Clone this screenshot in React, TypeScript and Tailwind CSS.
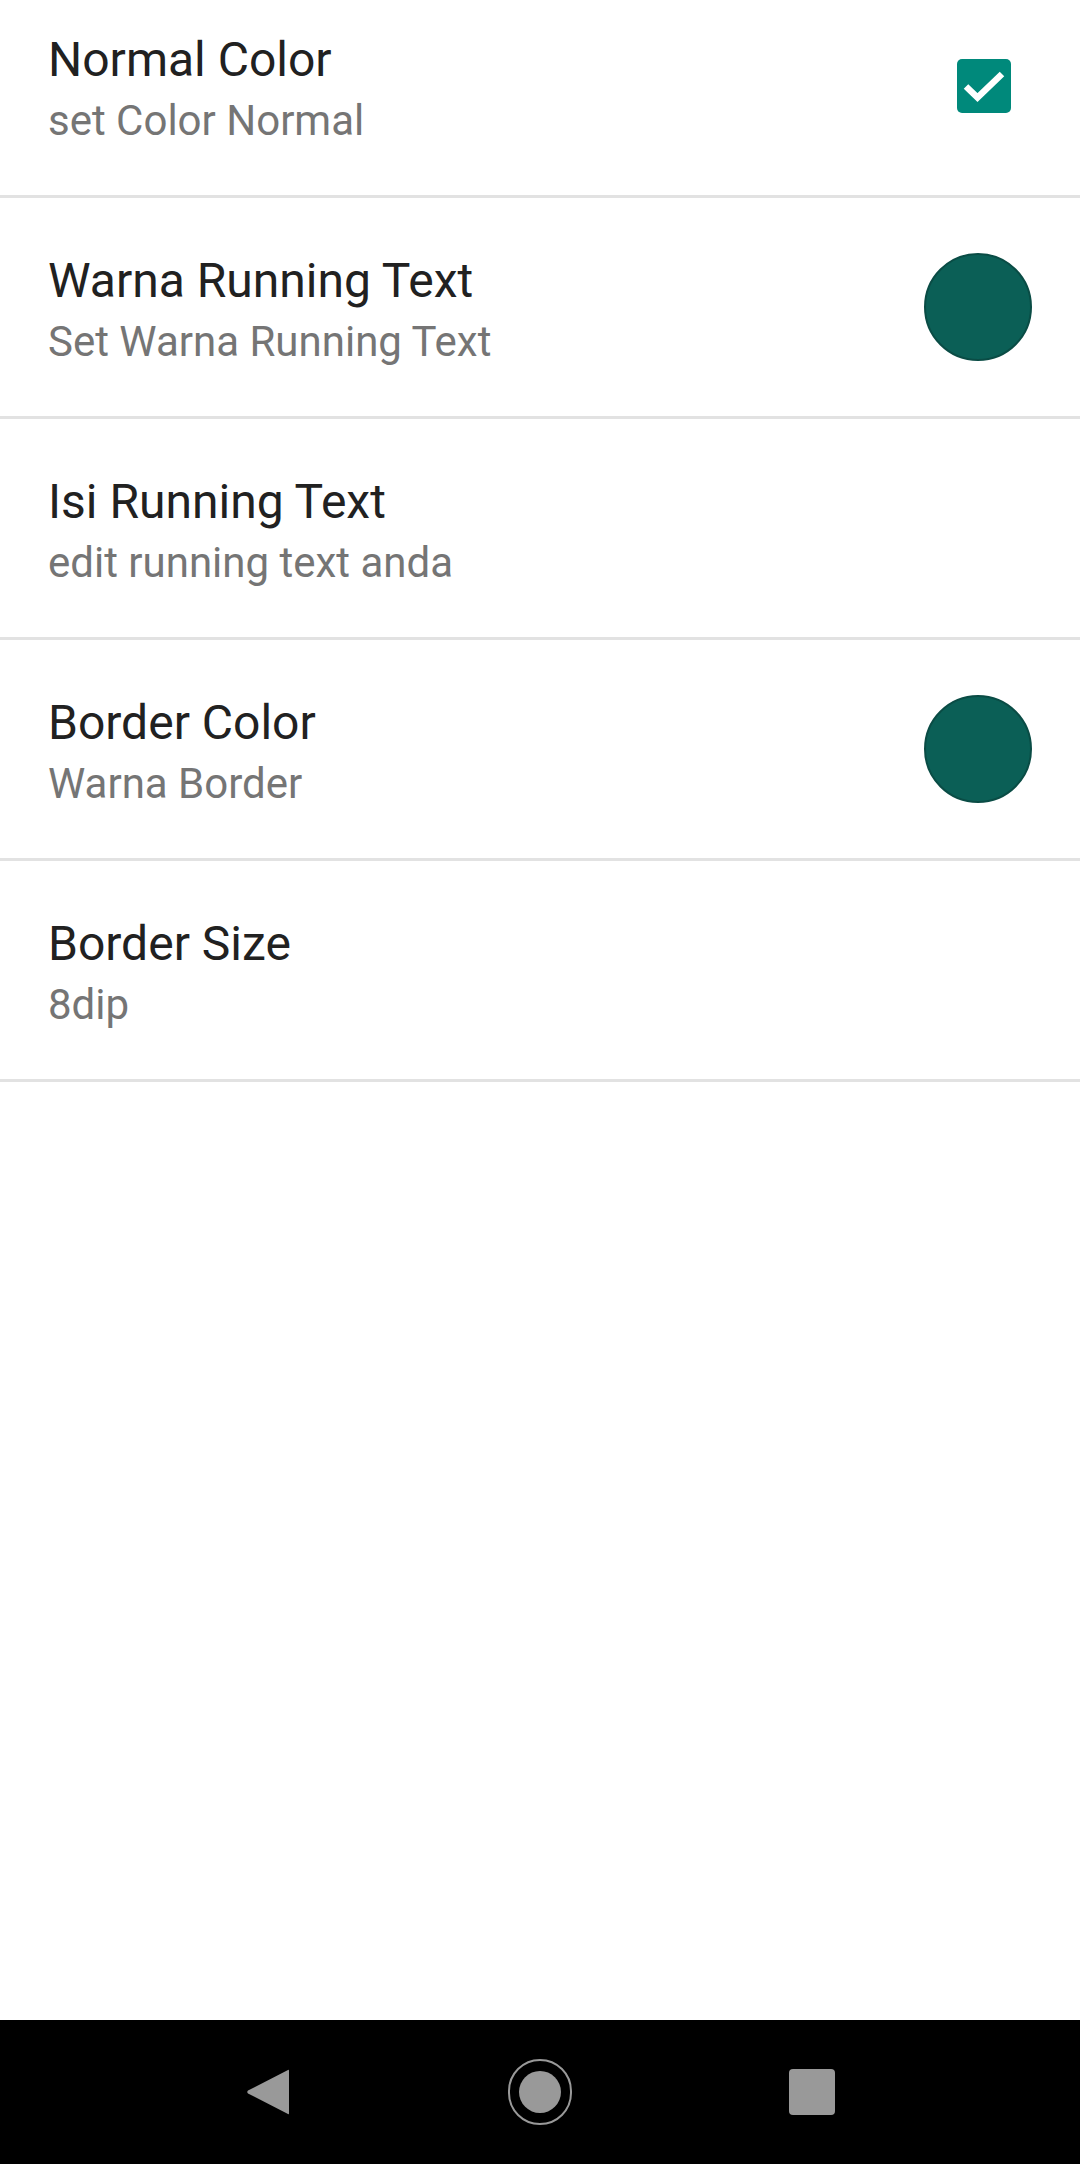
import type { ReactNode } from 'react'

type Pref = {
  title: string
  summary: string
  widget?: 'check' | 'color'
}

const PREFS: Pref[] = [
  { title: 'Normal Color', summary: 'set Color Normal', widget: 'check' },
  { title: 'Warna Running Text', summary: 'Set Warna Running Text', widget: 'color' },
  { title: 'Isi Running Text', summary: 'edit running text anda' },
  { title: 'Border Color', summary: 'Warna Border', widget: 'color' },
  { title: 'Border Size', summary: '8dip' },
]

function CheckBox() {
  return (
    <div className="mr-[21px] flex h-[54px] w-[54px] items-center justify-center rounded-[5px] bg-[#00897b]">
      <svg viewBox="0 0 54 54" className="h-[54px] w-[54px]">
        <polyline
          points="9,27.5 20.5,38.5 45,15"
          fill="none"
          stroke="#ffffff"
          strokeWidth="6.5"
          strokeLinejoin="miter"
        />
      </svg>
    </div>
  )
}

function ColorDot() {
  return <div className="h-[108px] w-[108px] rounded-full border-2 border-[#0a4c45] bg-[#0b5f56]" />
}

function PrefRow({ pref }: { pref: Pref }) {
  let widget: ReactNode = null
  if (pref.widget === 'check') widget = <CheckBox />
  if (pref.widget === 'color') widget = <ColorDot />

  return (
    <div className="flex h-[221px] items-center border-b-[3px] border-[#e2e2e2] pl-[48px] pr-[48px]">
      <div className="flex flex-1 flex-col pt-[6px]">
        <span className="text-[48px] leading-[56px] text-[#212121]">{pref.title}</span>
        <span className="mt-[8px] text-[42px] leading-[50px] text-[#757575]">{pref.summary}</span>
      </div>
      {widget}
    </div>
  )
}

function NavBar() {
  return (
    <div className="flex h-[144px] items-center justify-center gap-[176px] bg-black">
      {/* back */}
      <div className="flex w-[96px] justify-center">
        <svg viewBox="0 0 44 48" className="h-[48px] w-[44px]">
          <path d="M42 2 Q43 1 43 3 L43 45 Q43 47 42 46 L2 25.5 Q0.5 24 2 22.5 Z" fill="#999999" />
        </svg>
      </div>
      {/* home */}
      <div className="flex w-[96px] justify-center">
        <div className="flex h-[66px] w-[64px] items-center justify-center rounded-full border-2 border-[#999999]">
          <div className="h-[42px] w-[42px] rounded-full bg-[#999999]" />
        </div>
      </div>
      {/* recents */}
      <div className="flex w-[96px] justify-center">
        <div className="h-[46px] w-[46px] rounded-[4px] bg-[#999999]" />
      </div>
    </div>
  )
}

export default function App() {
  return (
    <div className="flex h-[2164px] w-[1080px] flex-col overflow-hidden bg-white font-['Roboto',sans-serif]">
      <div className="flex-1 overflow-hidden">
        <div className="-mt-[23px]">
          {PREFS.map((p) => (
            <PrefRow key={p.title} pref={p} />
          ))}
        </div>
      </div>
      <NavBar />
    </div>
  )
}
